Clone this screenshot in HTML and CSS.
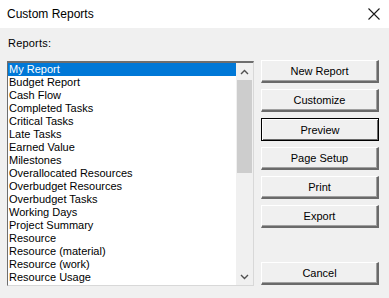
FILE: index.html
```html
<!DOCTYPE html>
<html>
<head>
<meta charset="utf-8">
<link rel="stylesheet" href="styles.css">
</head>
<body>
<div class="dialog">
  <div class="titlebar">
    <span class="title">Custom Reports</span>
    <svg class="close" width="12" height="12" viewBox="0 0 12 12"><path d="M0.5 0.5 L11.5 11.5 M11.5 0.5 L0.5 11.5" stroke="#1a1a1a" stroke-width="1.1" fill="none"/></svg>
  </div>
  <div class="content">
    <div class="label">Reports:</div>
    <div class="main">
      <div class="listbox">
        <ul class="items">
          <li class="sel">My Report</li>
          <li>Budget Report</li>
          <li>Cash Flow</li>
          <li>Completed Tasks</li>
          <li>Critical Tasks</li>
          <li>Late Tasks</li>
          <li>Earned Value</li>
          <li>Milestones</li>
          <li>Overallocated Resources</li>
          <li>Overbudget Resources</li>
          <li>Overbudget Tasks</li>
          <li>Working Days</li>
          <li>Project Summary</li>
          <li>Resource</li>
          <li>Resource (material)</li>
          <li>Resource (work)</li>
          <li>Resource Usage</li>
        </ul>
        <div class="scrollbar">
          <div class="arrow"><svg width="9" height="6" viewBox="0 0 9 6"><path d="M1 5 L4.5 1.5 L8 5" stroke="#505050" stroke-width="1.4" fill="none"/></svg></div>
          <div class="track"><div class="thumb"></div></div>
          <div class="arrow"><svg width="9" height="6" viewBox="0 0 9 6"><path d="M1 1 L4.5 4.5 L8 1" stroke="#505050" stroke-width="1.4" fill="none"/></svg></div>
        </div>
      </div>
      <div class="buttons">
        <button class="btn">New Report</button>
        <button class="btn">Customize</button>
        <button class="btn default">Preview</button>
        <button class="btn">Page Setup</button>
        <button class="btn">Print</button>
        <button class="btn">Export</button>
        <div class="spacer"></div>
        <button class="btn">Cancel</button>
      </div>
    </div>
  </div>
</div>
</body>
</html>
```

FILE: styles.css
```css
html, body {
  margin: 0;
  padding: 0;
}
body {
  width: 389px;
  height: 298px;
  overflow: hidden;
  background: #f0f0f0;
  font-family: "Liberation Sans", Arial, sans-serif;
  font-size: 11px;
  color: #000;
}
.dialog {
  width: 389px;
  height: 298px;
  display: flex;
  flex-direction: column;
}
.titlebar {
  height: 28px;
  background: #ffffff;
  display: flex;
  align-items: center;
  justify-content: space-between;
  padding: 0 8px 0 7px;
  flex-shrink: 0;
}
.title {
  font-family: "Liberation Sans", Arial, sans-serif;
  font-size: 12px;
  color: #000;
}
.close {
  margin-right: 1px;
}
.content {
  padding: 7px 0 0 7px;
}
.label {
  height: 25px;
  line-height: 16px;
  padding-left: 1px;
  letter-spacing: 0.2px;
}
.main {
  display: flex;
  align-items: flex-start;
}
.listbox {
  width: 245px;
  height: 222px;
  display: flex;
  background: #fff;
  border-top: 2px solid #6e6e6e;
  border-left: 1px solid #6e6e6e;
  border-right: 1px solid #d8d8d8;
  border-bottom: 1px solid #d8d8d8;
  margin-top: 1px;
}
.items {
  list-style: none;
  margin: 0;
  padding: 0;
  width: 228px;
  overflow: hidden;
}
.items li {
  height: 13px;
  line-height: 13px;
  padding-left: 1px;
  white-space: nowrap;
}
.items li.sel {
  background: #0078d7;
  color: #fff;
}
.scrollbar {
  width: 17px;
  display: flex;
  flex-direction: column;
  background: #f0f0f0;
}
.arrow {
  height: 17px;
  display: flex;
  align-items: center;
  justify-content: center;
}
.track {
  flex: 1;
  padding: 0 1px;
}
.thumb {
  height: 93px;
  background: #cdcdcd;
}
.buttons {
  width: 118px;
  margin-left: 7px;
  height: 224px;
  display: flex;
  flex-direction: column;
  gap: 6px;
}
.btn {
  height: 23px;
  flex-shrink: 0;
  padding: 0;
  margin: 0;
  font-family: "Liberation Sans", Arial, sans-serif;
  font-size: 11px;
  color: #000;
  background: #f0f0f0;
  border-top: 1px solid #ffffff;
  border-left: 1px solid #ffffff;
  border-right: 2px solid #6a6a6a;
  border-bottom: 2px solid #6a6a6a;
  box-shadow: inset -1px -1px 0 #a0a0a0;
}
.btn.default {
  border: 1px solid #000;
  box-shadow: inset 1px 1px 0 #fff, inset -1px -1px 0 #6a6a6a;
}
.spacer {
  height: 22px;
  flex-shrink: 0;
}
```
